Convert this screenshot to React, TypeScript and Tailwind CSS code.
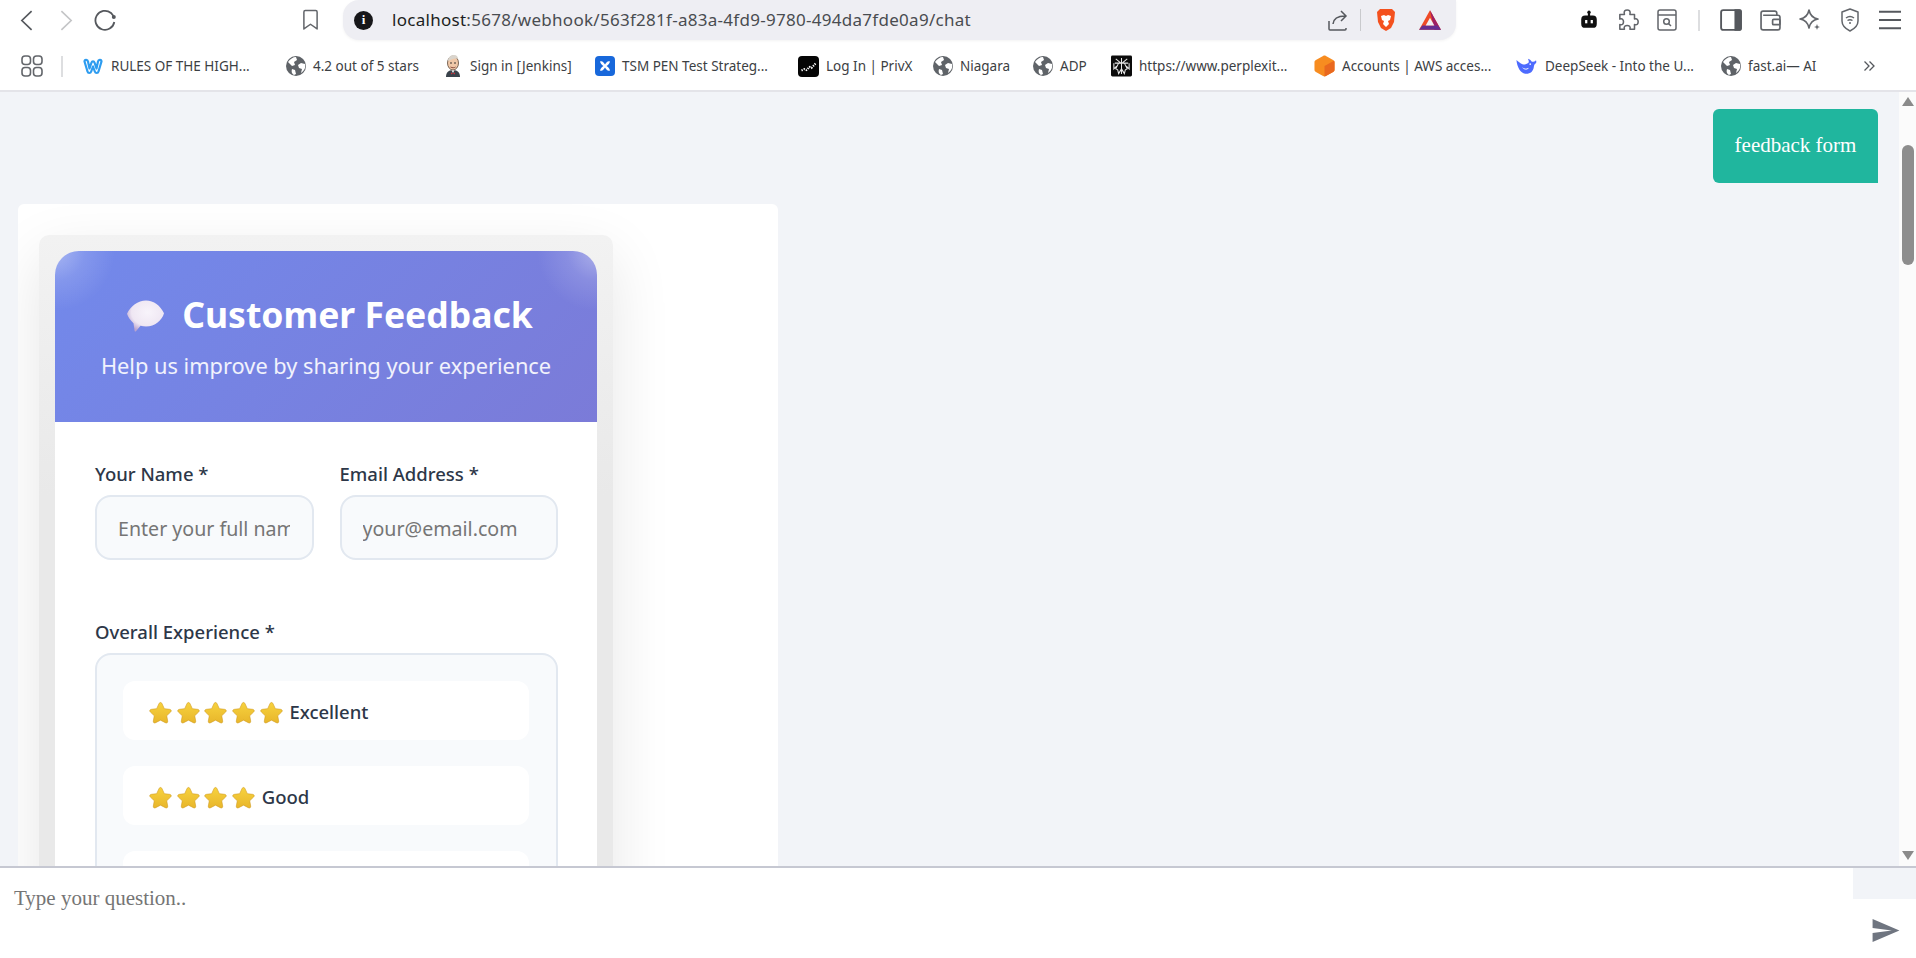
import type { ReactNode } from 'react';

const ui = 'font-["Noto_Sans",sans-serif]';

function Globe() {
  return (
    <svg viewBox="0 0 20 20" className="w-5 h-5 shrink-0">
      <circle cx="10" cy="10" r="10" fill="#5f6368" />
      <path d="M2 6c2-3 5-5 8-5l1 3-3 2 1 3-3 1-2-2zM19 8l-4-1-3 2 1 3 3 1-1 4c3-2 5-5 4-9zM6 13l3 1 1 4-2 1c-2-1-3-3-2-6z" fill="#fff" />
    </svg>
  );
}

function Weebly() {
  return (
    <svg viewBox="0 0 22 18" className="w-[22px] h-[18px] shrink-0">
      <path d="M2.500 4.500c0-2 3-2.500 3.500 0l1.500 7 2-6c.5-1.500 2.500-1.500 3 0l2 6 1.500-7c.5-2.500 3.500-2 3.500 0l-3 10c-.5 2-3 2-3.700 0L11 9.500 9.200 14.500c-.7 2-3.200 2-3.700 0z" fill="none" stroke="#2d9cf0" strokeWidth="2.200" strokeLinejoin="round" />
    </svg>
  );
}

function Jenkins() {
  return (
    <svg viewBox="0 0 20 24" className="w-5 h-6 shrink-0">
      <path d="M3 23c0-4 2-7 7-7s7 3 7 7z" fill="#39424b" />
      <path d="M8.500 16h3l-1.500 3z" fill="#fff" />
      <path d="M8 18.500l2 1 2-1v2l-2-1-2 1z" fill="#c8303a" />
      <ellipse cx="10" cy="9" rx="5.500" ry="7" fill="#f0c8a8" stroke="#5b4636" strokeWidth="0.800" />
      <path d="M5 7c0-4 3-6 6-6 3 0 4 2 4 4-3-1-6 0-10 2z" fill="#d9d4cc" />
      <circle cx="8" cy="9" r="0.800" fill="#222" />
      <circle cx="12" cy="9" r="0.800" fill="#222" />
      <path d="M7.500 13c2 1 3.500 1 5 0" stroke="#8a4a3a" fill="none" />
    </svg>
  );
}

function Tsm() {
  return (
    <svg viewBox="0 0 20 20" className="w-5 h-5 shrink-0">
      <rect width="20" height="20" rx="4" fill="#1868db" />
      <path d="M5 5.500c2.500-1 3.500 1 5 3 1.500-2 2.500-4 5-3-.5 2.500-2 3.500-3.500 4.500 1.500 1 3 2 3.500 4.500-2.500 1-3.500-1-5-3-1.500 2-2.500 4-5 3 .5-2.500 2-3.500 3.500-4.500C7 9 5.500 8 5 5.500z" fill="#fff" />
    </svg>
  );
}

function Privx() {
  return (
    <svg viewBox="0 0 21 21" className="w-[21px] h-[21px] shrink-0">
      <rect width="21" height="21" rx="4" fill="#050505" />
      <path d="M3.500 14.500l3-1.500 2 1 3-3 2 1 4-4.500" fill="none" stroke="#fff" strokeWidth="2" strokeDasharray="1.300 1.100" />
    </svg>
  );
}

function Perplexity() {
  return (
    <svg viewBox="0 0 22 22" className="w-[21px] h-[22px] shrink-0">
      <rect width="22" height="22" rx="1.500" fill="#0b0b0b" />
      <path d="M11 2.500v17M5 3.500l6 5 6-5M4 8h14M3 8v6l3-3M19 8v6l-3-3M8 8l-3 6 2 1 1 4 3-5 3 5 1-4 2-1-3-6" fill="none" stroke="#e8e8e8" strokeWidth="1.100" />
    </svg>
  );
}

function AwsBox() {
  return (
    <svg viewBox="0 0 22 24" className="w-[21px] h-6 shrink-0">
      <path d="M9.500 1.400c1-.6 2-.6 3 0l7.500 4.300c1 .6 1.500 1.300 1.500 2.300v8c0 1-.5 1.800-1.500 2.300l-7.500 4.300c-1 .6-2 .6-3 0L2 18.300C1 17.800.5 17 .5 16V8c0-1 .5-1.700 1.500-2.300z" fill="#f78c20" />
      <path d="M11 12l10-5.500c.3.4.5 1 .5 1.500v8c0 1-.5 1.800-1.500 2.300l-7.500 4.300c-.5.300-1 .4-1.500.4z" fill="#e9681f" />
    </svg>
  );
}

function Whale() {
  return (
    <svg viewBox="0 0 24 20" className="w-[22px] h-5 shrink-0">
      <path d="M.5 3.500C2 4.500 4 7 7 8c3 1 5 0 7-2 0-2-.5-3-1-4 2 .5 3 1.500 4 3 1.500.5 3 .5 4-.5.5-.5 1-.5 1 0 .5 1.500 0 2.500-1 3-1 .5-1 1.500-1.500 3C19 15.500 16 18.500 11 18.500 5 18.500 1 11 .5 3.500z" fill="#4d6bfe" />
      <path d="M6.500 11c2 2 5 2.500 7.500 1-1 2.500-5 3-7.500-1z" fill="#fff" />
      <circle cx="15.500" cy="8" r="0.900" fill="#fff" />
    </svg>
  );
}

function GridIcon() {
  return (
    <svg viewBox="0 0 22 22" className="w-[22px] h-[22px] shrink-0" fill="none" stroke="#63666b" strokeWidth="1.600">
      <rect x="1" y="1" width="8.500" height="8.500" rx="3" />
      <rect x="12.500" y="1" width="8.500" height="8.500" rx="3" />
      <rect x="1" y="12.500" width="8.500" height="8.500" rx="3" />
      <rect x="12.500" y="12.500" width="8.500" height="8.500" rx="3" />
    </svg>
  );
}

function Star() {
  return (
    <svg viewBox="0 0 24 24" className="w-[23px] h-[23px] shrink-0">
      <defs>
        <linearGradient id="star" x1="0" y1="0" x2="0" y2="1">
          <stop offset="0%" stopColor="#f7d23e" />
          <stop offset="100%" stopColor="#e8b62b" />
        </linearGradient>
      </defs>
      <path d="M12 1.500c.8 0 1.300.6 1.700 1.500l2.300 5 5.500.7c1.900.3 2.200 1.700 1 2.900l-4 3.800 1 5.500c.3 1.800-1 2.500-2.500 1.700L12 20l-5 2.600c-1.500.8-2.800.1-2.500-1.700l1-5.500-4-3.800c-1.200-1.200-.9-2.600 1-2.900L8 8l2.300-5c.4-.9.900-1.500 1.700-1.500z" fill="url(#star)" stroke="#cf9a1e" strokeWidth="0.600" />
    </svg>
  );
}

function Balloon() {
  return (
    <svg viewBox="0 0 37 29" preserveAspectRatio="none" className="mt-[3px] w-[37px] h-8 shrink-0">
      <defs>
        <radialGradient id="balloon" cx="56%" cy="38%" r="64%">
          <stop offset="0%" stopColor="#f8f4fb" />
          <stop offset="68%" stopColor="#efe7f3" />
          <stop offset="100%" stopColor="#b9a3cf" />
        </radialGradient>
      </defs>
      <path d="M19 .5c8 0 14 4.500 18 11.500-2 6.500-9 12-18 12-2 0-3.800-.2-5.500-.7L9 28.300c-.8.6-1.300.2-1.500-.8L6.500 21C3.500 18.500 1 15.500 0 12.500 3.500 5.500 11 .5 19 .5z" fill="url(#balloon)" />
    </svg>
  );
}

function Bookmark({ w, icon, label }: { w: string; icon: ReactNode; label: string }) {
  return (
    <div className={`flex items-center gap-[7px] shrink-0 ${w}`}>
      {icon}
      <span className="text-[13.500px] text-[#3c4043] whitespace-nowrap">{label}</span>
    </div>
  );
}

function Toolbar() {
  return (
    <div className="h-[46px] flex items-start bg-white shrink-0">
      <div className="w-[343px] h-10 flex items-center shrink-0">
        <svg viewBox="0 0 14 22" className="ml-[20px] w-[13px] h-[21px]" fill="none" stroke="#55585d" strokeWidth="1.800"><path d="M12.500 1L2 11l10.500 10" /></svg>
        <svg viewBox="0 0 14 22" className="ml-[27px] w-[13px] h-[21px]" fill="none" stroke="#c4c5c7" strokeWidth="1.800"><path d="M1.500 1L12 11 1.500 21" /></svg>
        <svg viewBox="0 0 22 22" className="ml-[21px] w-[22px] h-[22px]" fill="none" stroke="#55585d" strokeWidth="1.800"><path d="M20.300 13A9.500 9.500 0 1 1 17 4l2.500 3" /><circle cx="19.800" cy="8" r="2" fill="#55585d" stroke="none" /></svg>
        <svg viewBox="0 0 18 22" className="ml-[186px] w-[17px] h-[22px]" fill="none" stroke="#63666b" strokeWidth="1.600"><path d="M2 2.500C2 1.500 2.500 1 3.500 1h11c1 0 1.500.5 1.500 1.500V20.500l-7-5-7 5z" strokeLinejoin="round" /></svg>
      </div>
      <div className="w-[1113px] h-10 bg-[#eeeef3] rounded-b-2xl rounded-l-2xl flex items-center shrink-0 shadow-[0_1px_3px_rgba(0,0,0,0.05)]">
        <span className="ml-[11px] w-[19px] h-[19px] rounded-full bg-[#17171a] text-white flex items-center justify-center text-[13px] font-bold font-['Liberation_Serif',serif] shrink-0">i</span>
        <span className="ml-[19px] text-[17px] tracking-[0.28px] whitespace-nowrap text-[#494c50]"><span className="text-[#1c1e21]">localhost</span>:5678/webhook/563f281f-a83a-4fd9-9780-494da7fde0a9/chat</span>
        <div className="ml-auto flex items-center shrink-0">
          <svg viewBox="0 0 20 22" className="w-5 h-[22px]" fill="none" stroke="#55585d" strokeWidth="1.500"><path d="M1 12v8c0 .7.4 1 1 1h15c.6 0 1-.3 1-1v-1M5 15c.5-5 4-8 12-8M13 2l5 5-5 5" /></svg>
          <div className="ml-[12px] w-px h-[22px] bg-[#c9cacd]" />
          <svg viewBox="0 0 20 24" className="ml-[15px] w-5 h-[24px]">
            <path d="M4 1h12l3 3-1 10-3 6-5 3-5-3-3-6L1 4z" fill="#f4511e" />
            <path d="M5 8l3-1 2 1 2-1 3 1-1 4-2 1 1 3-3 3-3-3 1-3-2-1z" fill="#fff" />
          </svg>
          <svg viewBox="0 0 22 20" className="ml-[22px] mr-[14px] w-6 h-[22px]">
            <path d="M11 1l10 18H1z" fill="#ef4a26" />
            <path d="M11 1l10 18h-6z" fill="#9e1f63" />
            <path d="M1 19h20l-3-4H4z" fill="#662d91" />
            <path d="M11 8l4 7H7z" fill="#eeeef3" />
          </svg>
        </div>
      </div>
      <div className="h-10 flex items-center shrink-0">
        <svg viewBox="0 0 16 18" className="ml-[124px] w-[18px] h-5"><circle cx="8" cy="2" r="1.500" fill="#111" /><path d="M7 2h2v4H7z" fill="#111" /><rect x="1" y="5" width="14" height="11" rx="3.500" fill="#111" /><rect x="4.500" y="9" width="2" height="3" fill="#fff" /><rect x="9.500" y="9" width="2" height="3" fill="#fff" /></svg>
        <svg viewBox="0 0 24 24" className="ml-[20px] w-[22px] h-[22px]" fill="none" stroke="#63666b" strokeWidth="1.700"><path d="M2 6h5c-1-4 1-5 3-5s4 1 3 5h5v5c3-1 4 1 4 3s-1 4-4 3v5H13c1-3-1-4-3-4s-4 1-3 4H2v-5c3 1 4-1 4-3s-1-4-4-3z" strokeLinejoin="round" /></svg>
        <svg viewBox="0 0 20 22" className="ml-[16px] w-[22px] h-[22px]" fill="none" stroke="#63666b" strokeWidth="1.500"><rect x="1" y="1" width="18" height="20" rx="2" /><path d="M1 6h18" /><circle cx="9.500" cy="12.500" r="2.800" /><path d="M11.500 14.500l2.500 2.500" /></svg>
        <div className="ml-[20px] w-0.5 h-[21px] bg-[#dddee0]" />
        <svg viewBox="0 0 20 20" className="ml-[20px] w-[22px] h-[22px]" fill="none" stroke="#55585d" strokeWidth="1.700"><rect x="1" y="1" width="18" height="18" rx="2" /><path d="M14 1h4a1 1 0 0 1 1 1v16a1 1 0 0 1-1 1h-4z" fill="#55585d" /></svg>
        <svg viewBox="0 0 20 20" className="ml-[18px] w-[21px] h-[21px]" fill="none" stroke="#63666b" strokeWidth="1.600"><path d="M16 5V3c0-1-.5-2-2-2H3C2 1 1 2 1 3v14c0 1 1 2 2 2h14c1 0 2-1 2-2V7c0-1-1-2-2-2H3" /><rect x="12" y="9" width="7" height="5" rx="1" /></svg>
        <svg viewBox="0 0 22 22" className="ml-[18px] w-[22px] h-[22px]" fill="none" stroke="#63666b" strokeWidth="1.600"><path d="M10 1c1 5 3 8 9 9-6 1-8 4-9 9-1-5-3-8-9-9 6-1 8-4 9-9z" strokeLinejoin="round" /><path d="M18 15l.8 2.200L21 18l-2.200.8L18 21l-.8-2.200L15 18l2.200-.8z" fill="#63666b" stroke="none" /></svg>
        <svg viewBox="0 0 18 24" className="ml-[19px] w-5 h-6" fill="none" stroke="#63666b" strokeWidth="1.500"><path d="M9 1l8 3v9c0 5-4 8-8 10-4-2-8-5-8-10V4z" strokeLinejoin="round" /><path d="M5 10c2.500-2 5.500-2 8 0M6.500 12.500c1.500-1 3.500-1 5 0" /><circle cx="9" cy="15" r="1" fill="#63666b" stroke="none" /></svg>
        <svg viewBox="0 0 20 18" className="ml-[19px] w-[22px] h-[20px]" fill="none" stroke="#55585d" strokeWidth="1.700"><path d="M0 1.500h20M0 9h20M0 16.500h20" /></svg>
      </div>
    </div>
  );
}

function BookmarksBar() {
  return (
    <div className="h-[46px] flex items-start pt-[9px] bg-white border-b-2 border-[#e4e4e9] shrink-0">
      <div className="ml-[21px] flex items-center h-[22px] shrink-0">
        <GridIcon />
        <div className="ml-[18px] mr-[19px] w-0.5 h-[21px] bg-[#dddee0]" />
      </div>
      <div className="flex items-center h-[22px]">
        <Bookmark w="w-[204px]" icon={<Weebly />} label="RULES OF THE HIGH..." />
        <Bookmark w="w-[157px]" icon={<Globe />} label="4.2 out of 5 stars" />
        <Bookmark w="w-[152px]" icon={<Jenkins />} label="Sign in [Jenkins]" />
        <Bookmark w="w-[203px]" icon={<Tsm />} label="TSM PEN Test Strateg..." />
        <Bookmark w="w-[135px]" icon={<Privx />} label="Log In | PrivX" />
        <Bookmark w="w-[100px]" icon={<Globe />} label="Niagara" />
        <Bookmark w="w-[78px]" icon={<Globe />} label="ADP" />
        <Bookmark w="w-[203px]" icon={<Perplexity />} label="https://www.perplexit..." />
        <Bookmark w="w-[202px]" icon={<AwsBox />} label="Accounts | AWS acces..." />
        <Bookmark w="w-[205px]" icon={<Whale />} label="DeepSeek - Into the U..." />
        <Bookmark w="w-[142px]" icon={<Globe />} label="fast.ai— AI" />
        <svg viewBox="0 0 12 12" className="w-3 h-3" fill="none" stroke="#55585d" strokeWidth="1.300"><path d="M1.500 1.500L6 6l-4.500 4.500M6.500 1.500L11 6l-4.500 4.500" /></svg>
      </div>
    </div>
  );
}

function RatingRow({ stars, label }: { stars: number; label: string }) {
  return (
    <div className="h-[59px] rounded-xl bg-white flex items-center pl-[26px] pt-[3px] gap-[4.700px] shrink-0">
      {Array.from({ length: stars }).map((_, i) => (
        <Star key={i} />
      ))}
      <span className="ml-[2px] text-[18.500px] font-medium text-[#2d3748]">{label}</span>
    </div>
  );
}

function FeedbackForm() {
  return (
    <div className={`ml-[21px] mt-[31px] w-[574px] px-4 pt-4 rounded-t-[10px] bg-[linear-gradient(#f2f2f2,#e9e9e9_260px)] shadow-[0_20px_60px_rgba(0,0,0,0.1)] ${ui}`}>
      <div className="h-[171px] rounded-t-3xl bg-[radial-gradient(circle_at_0_0,rgba(255,255,255,0.38),rgba(255,255,255,0.12)_30px,rgba(255,255,255,0)_60px),radial-gradient(circle_at_100%_0,rgba(255,255,255,0.38),rgba(255,255,255,0.12)_30px,rgba(255,255,255,0)_60px),linear-gradient(135deg,#7289eb,#7b7bd8)] flex flex-col items-center pt-[43px]">
        <div className="ml-[8px] flex items-center gap-[18px] h-[40px]">
          <Balloon />
          <h1 className="text-[35.500px] font-bold text-white leading-10">Customer Feedback</h1>
        </div>
        <p className="mt-[18px] text-[21.800px] leading-7 text-white/90">Help us improve by sharing your experience</p>
      </div>
      <div className="bg-white pl-10 pr-[39px] pt-10 pb-8">
        <div className="grid grid-cols-2 gap-[26px]">
          <label className="block min-w-0">
            <span className="block text-[18.500px] leading-6 font-medium text-[#2d3748] mb-[9px]">Your Name *</span>
            <input className="w-full h-[65px] pl-[21px] pr-[22px] pt-0.5 rounded-2xl border-2 border-[#e2e8f0] bg-[#f8fafc] text-[19.600px] placeholder:text-[#757575]" placeholder="Enter your full name" />
          </label>
          <label className="block min-w-0">
            <span className="block text-[18.500px] leading-6 font-medium text-[#2d3748] mb-[9px]">Email Address *</span>
            <input className="w-full h-[65px] pl-[21px] pr-[22px] pt-0.5 rounded-2xl border-2 border-[#e2e8f0] bg-[#f8fafc] text-[19.600px] placeholder:text-[#757575]" placeholder="your@email.com" />
          </label>
        </div>
        <span className="block mt-[60px] text-[18.500px] leading-6 font-medium text-[#2d3748] mb-[9px]">Overall Experience *</span>
        <div className="rounded-2xl border-2 border-[#e2e8f0] bg-[#f8fafc] pl-[26px] pr-[27px] pt-[26px] pb-6 flex flex-col gap-[26px]">
          <RatingRow stars={5} label="Excellent" />
          <RatingRow stars={4} label="Good" />
          <RatingRow stars={3} label="Average" />
        </div>
      </div>
    </div>
  );
}

function Scrollbar() {
  return (
    <div className="w-[17px] bg-[#fbfbfb] flex flex-col items-center shrink-0">
      <svg viewBox="0 0 12 9" className="mt-[5px] w-3 h-[9px] shrink-0"><path d="M6 0l6 9H0z" fill="#8a8a8a" /></svg>
      <div className="mt-[39px] w-3 ml-px h-[120px] rounded-md bg-[#8d8d8d] shrink-0" />
      <svg viewBox="0 0 12 9" className="mt-auto mb-[6px] w-3 h-[9px] shrink-0"><path d="M6 9L0 0h12z" fill="#8a8a8a" /></svg>
    </div>
  );
}

export default function App() {
  return (
    <div className={`h-screen w-full flex flex-col overflow-hidden bg-white ${ui}`}>
      <Toolbar />
      <BookmarksBar />
      <div className="flex-1 min-h-0 flex">
        <div className="flex-1 min-w-0 bg-[#f2f4f8] overflow-hidden flex flex-col">
          <div className="mt-[17px] mr-[21px] self-end bg-[#20b69e] text-white rounded-t-md rounded-bl-md h-[74px] w-[165px] justify-center flex items-center text-[21px] font-['Liberation_Serif',serif]">
            feedback form
          </div>
          <div className="mt-[21px] ml-[18px] w-[760px] flex-1 bg-white rounded-t-md overflow-hidden">
            <FeedbackForm />
          </div>
        </div>
        <Scrollbar />
      </div>
      <div className="h-[92px] border-t-2 border-[#c6c8d2] flex bg-white shrink-0">
        <textarea className="flex-1 resize-none outline-none pl-[14px] pt-[16px] text-[21px] leading-7 font-['Liberation_Serif',serif] placeholder:text-[#757575]" placeholder="Type your question.." />
        <div className="w-[63px] flex flex-col items-center shrink-0">
          <div className="w-full h-[31px] bg-[#f2f4f8]" />
          <svg viewBox="2 3 21 18" className="mt-[20px] ml-[3px] w-[28px] h-[23px]"><path d="M2 21l21-9L2 3v7l15 2-15 2z" fill="#6f7580" /></svg>
        </div>
      </div>
    </div>
  );
}
